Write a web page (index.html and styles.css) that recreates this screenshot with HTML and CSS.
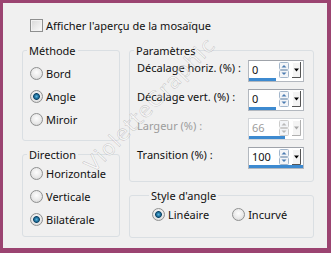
FILE: index.html
```html
<!DOCTYPE html>
<html lang="fr">
<head>
  <meta charset="UTF-8" />
  <meta name="viewport" content="width=device-width, initial-scale=1.0" />
  <title>Mosaïque sans jointure</title>
  <link rel="stylesheet" href="styles.css">
</head>
<body>
  <div class="frame">
    <label class="check-row"><span class="checkbox"></span>Afficher l'aperçu de la mosaïque</label>

    <div class="columns">
      <div class="col col-left">
        <fieldset class="group method">
          <legend>Méthode</legend>
          <div class="radio"><span class="dot"></span>Bord</div>
          <div class="radio"><span class="dot on"></span>Angle</div>
          <div class="radio"><span class="dot"></span>Miroir</div>
        </fieldset>

        <fieldset class="group direction">
          <legend>Direction</legend>
          <div class="radio"><span class="dot"></span>Horizontale</div>
          <div class="radio"><span class="dot"></span>Verticale</div>
          <div class="radio"><span class="dot on"></span>Bilatérale</div>
        </fieldset>
      </div>

      <div class="col col-right">
        <fieldset class="group params">
          <legend>Paramètres</legend>

          <div class="field">
            <span class="field-label">Décalage horiz. (%) :</span>
            <div class="spin">
              <div class="spin-row">
                <span class="spin-value">0</span>
                <svg class="spin-arrows" width="10" height="16" viewBox="0 0 10 16"><rect x="0.5" y="0.5" width="9" height="7" rx="1"/><rect x="0.5" y="8.5" width="9" height="7" rx="1"/><path d="M2.5 5.5 5 3 7.5 5.5Z"/><path d="M2.5 10.5H7.5L5 13Z"/></svg>
                <svg class="spin-drop" width="9" height="16" viewBox="0 0 9 16"><path class="face" d="M0 0H9V16H0Z"/><path class="hi" d="M0.5 15V0.5H8"/><path class="lo" d="M8.5 0V15.5H0"/><path class="tri" d="M2 6.5H7L4.5 9.5Z"/></svg>
              </div>
              <div class="spin-bar" style="width: 50%"></div>
            </div>
          </div>

          <div class="field">
            <span class="field-label">Décalage vert. (%) :</span>
            <div class="spin">
              <div class="spin-row">
                <span class="spin-value">0</span>
                <svg class="spin-arrows" width="10" height="16" viewBox="0 0 10 16"><rect x="0.5" y="0.5" width="9" height="7" rx="1"/><rect x="0.5" y="8.5" width="9" height="7" rx="1"/><path d="M2.5 5.5 5 3 7.5 5.5Z"/><path d="M2.5 10.5H7.5L5 13Z"/></svg>
                <svg class="spin-drop" width="9" height="16" viewBox="0 0 9 16"><path class="face" d="M0 0H9V16H0Z"/><path class="hi" d="M0.5 15V0.5H8"/><path class="lo" d="M8.5 0V15.5H0"/><path class="tri" d="M2 6.5H7L4.5 9.5Z"/></svg>
              </div>
              <div class="spin-bar" style="width: 50%"></div>
            </div>
          </div>

          <div class="field disabled">
            <span class="field-label">Largeur (%) :</span>
            <div class="spin">
              <div class="spin-row">
                <span class="spin-value">66</span>
                <svg class="spin-arrows" width="10" height="16" viewBox="0 0 10 16"><rect x="0.5" y="0.5" width="9" height="7" rx="1"/><rect x="0.5" y="8.5" width="9" height="7" rx="1"/><path d="M2.5 5.5 5 3 7.5 5.5Z"/><path d="M2.5 10.5H7.5L5 13Z"/></svg>
                <svg class="spin-drop" width="9" height="16" viewBox="0 0 9 16"><path class="face" d="M0 0H9V16H0Z"/><path class="hi" d="M0.5 15V0.5H8"/><path class="lo" d="M8.5 0V15.5H0"/><path class="tri" d="M2 6.5H7L4.5 9.5Z"/></svg>
              </div>
              <div class="spin-bar" style="width: 66%"></div>
            </div>
          </div>

          <div class="field">
            <span class="field-label">Transition (%) :</span>
            <div class="spin">
              <div class="spin-row">
                <span class="spin-value">100</span>
                <svg class="spin-arrows" width="10" height="16" viewBox="0 0 10 16"><rect x="0.5" y="0.5" width="9" height="7" rx="1"/><rect x="0.5" y="8.5" width="9" height="7" rx="1"/><path d="M2.5 5.5 5 3 7.5 5.5Z"/><path d="M2.5 10.5H7.5L5 13Z"/></svg>
                <svg class="spin-drop" width="9" height="16" viewBox="0 0 9 16"><path class="face" d="M0 0H9V16H0Z"/><path class="hi" d="M0.5 15V0.5H8"/><path class="lo" d="M8.5 0V15.5H0"/><path class="tri" d="M2 6.5H7L4.5 9.5Z"/></svg>
              </div>
              <div class="spin-bar" style="width: 100%"></div>
            </div>
          </div>
        </fieldset>

        <fieldset class="group corner">
          <legend>Style d'angle</legend>
          <div class="radio-line">
            <div class="radio"><span class="dot on"></span>Linéaire</div>
            <div class="radio"><span class="dot"></span>Incurvé</div>
          </div>
        </fieldset>
      </div>
    </div>

    <span class="watermark">VioletteGraphic</span>
  </div>
</body>
</html>
```

FILE: styles.css
```css
body {
  margin: 0;
  font-family: "Noto Sans", "Open Sans", sans-serif;
  font-size: 11px;
  color: #111;
}
.frame {
  position: relative;
  width: 331px;
  height: 253px;
  box-sizing: border-box;
  border-style: solid;
  border-color: #9b4471;
  border-width: 3px 4px 5px 3px;
  background: #f0f0f0;
  padding: 16px 0 0 19px;
  overflow: hidden;
}
.check-row {
  display: flex;
  align-items: center;
  gap: 3px;
  height: 13px;
  line-height: 15px;
  margin-left: 8px;
}
.checkbox {
  flex: none;
  width: 13px;
  height: 13px;
  box-sizing: border-box;
  border: 1px solid #8e8f8f;
  background: linear-gradient(135deg, #d8d8d8, #fbfbfb);
  box-shadow: inset 0 0 0 1px #f2f2f2;
}
.columns {
  display: flex;
  gap: 9px;
  margin-top: 11px;
}
.col {
  display: flex;
  flex-direction: column;
  gap: 6px;
}
.col-left {
  width: 98px;
}
.col-right {
  width: 185px;
}
.group {
  margin: 0;
  padding: 0 7px;
  border: 1px solid #dadfe3;
  border-radius: 3px;
  min-width: 0;
}
.group legend {
  margin-left: -3px;
  padding: 0 2px;
  line-height: 15px;
}
.method {
  padding-top: 4px;
  padding-bottom: 9px;
}
.direction {
  padding-bottom: 5px;
}
.params {
  padding-top: 2px;
  padding-bottom: 12px;
  padding-right: 9px;
}
.corner {
  padding-left: 22px;
  padding-bottom: 11px;
}
.radio {
  display: flex;
  align-items: center;
  gap: 3px;
  height: 23px;
}
.radio-line {
  display: flex;
  gap: 23px;
}
.dot {
  flex: none;
  width: 13px;
  height: 13px;
  box-sizing: border-box;
  border-radius: 50%;
  border: 1px solid #8f9090;
  background: radial-gradient(circle at 50% 40%, #fdfdfd, #e9e9e9 55%, #cfcfcf);
}
.dot.on {
  background:
    radial-gradient(circle at 50% 50%, #5cb7e2 0, #1f6f9a 2px, #0f4466 3px, rgba(15, 68, 102, 0) 3.8px),
    radial-gradient(circle at 50% 40%, #fdfdfd, #e9e9e9 55%, #cfcfcf);
}
.field {
  display: flex;
  justify-content: space-between;
  align-items: flex-start;
  height: 22px;
  margin-bottom: 7px;
}
.field:last-child {
  margin-bottom: 0;
}
.field-label {
  line-height: 16px;
}
.spin {
  width: 56px;
  height: 22px;
  box-sizing: border-box;
  border: 1px solid #b3b8bf;
  border-top-color: #9fa3aa;
  background: #fff;
  display: flex;
  flex-direction: column;
}
.spin-row {
  display: flex;
  align-items: flex-start;
  height: 17px;
}
.spin-value {
  width: 27px;
  padding-left: 3px;
  line-height: 17px;
}
.spin-arrows {
  margin-top: 1px;
}
.spin-arrows rect {
  fill: #f3f5f8;
  stroke: #a3b6cb;
}
.spin-arrows path {
  fill: #4c7db2;
}
.spin-drop {
  margin-top: 1px;
  margin-left: 3px;
}
.spin-drop .face {
  fill: #f4f4f4;
}
.spin-drop .hi {
  fill: none;
  stroke: #ffffff;
}
.spin-drop .lo {
  fill: none;
  stroke: #555;
}
.spin-drop .tri {
  fill: #000;
}
.spin-bar {
  height: 3px;
  background: #3d8ad0;
}
.disabled .field-label,
.disabled .spin-value {
  color: #9c9c9c;
}
.disabled .spin {
  border-color: #d2d5d9;
}
.disabled .spin-arrows rect {
  stroke: #cccccc;
}
.disabled .spin-arrows path {
  fill: #b8b8b8;
}
.disabled .spin-drop .lo {
  stroke: #b0b0b0;
}
.disabled .spin-drop .tri {
  fill: #a8a8a8;
}
.watermark {
  position: absolute;
  left: 17px;
  top: 90px;
  width: 260px;
  text-align: center;
  font-family: "DejaVu Sans", sans-serif;
  font-size: 21px;
  letter-spacing: 1px;
  line-height: 24px;
  color: rgba(255, 255, 255, 0.45);
  -webkit-text-stroke: 0.6px rgba(0, 0, 0, 0.18);
  transform: rotate(-46deg);
  pointer-events: none;
}
```
